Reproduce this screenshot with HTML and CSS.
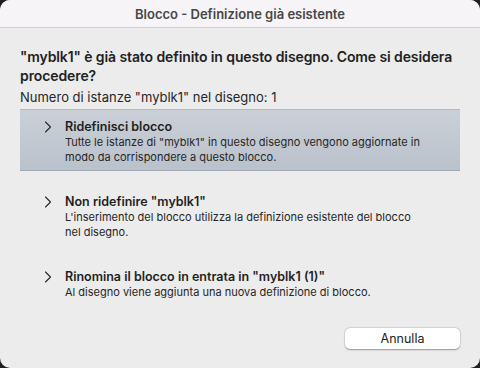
FILE: index.html
```html
<!DOCTYPE html>
<html lang="it">
<head>
  <meta charset="UTF-8" />
  <title>Blocco - Definizione già esistente</title>
  <link rel="stylesheet" href="styles.css">
</head>
<body>
  <div class="window">
    <div class="titlebar">Blocco - Definizione già esistente</div>

    <div class="content">
      <div class="question">"myblk1" è già stato definito in questo disegno. Come si desidera procedere?</div>
      <div class="count">Numero di istanze "myblk1" nel disegno: 1</div>

      <div class="options">
        <div class="option active">
          <svg class="chev" width="8" height="12" viewBox="0 0 8 12"><polyline points="1.5,1 6.5,6 1.5,11" /></svg>
          <div class="option-text">
            <div class="option-title">Ridefinisci blocco</div>
            <div class="option-desc">Tutte le istanze di "myblk1" in questo disegno vengono aggiornate in modo da corrispondere a questo blocco.</div>
          </div>
        </div>
        <div class="option">
          <svg class="chev" width="8" height="12" viewBox="0 0 8 12"><polyline points="1.5,1 6.5,6 1.5,11" /></svg>
          <div class="option-text">
            <div class="option-title">Non ridefinire "myblk1"</div>
            <div class="option-desc">L'inserimento del blocco utilizza la definizione esistente del blocco nel disegno.</div>
          </div>
        </div>
        <div class="option">
          <svg class="chev" width="8" height="12" viewBox="0 0 8 12"><polyline points="1.5,1 6.5,6 1.5,11" /></svg>
          <div class="option-text">
            <div class="option-title">Rinomina il blocco in entrata in "myblk1 (1)"</div>
            <div class="option-desc">Al disegno viene aggiunta una nuova definizione di blocco.</div>
          </div>
        </div>
      </div>

      <div class="footer">
        <button class="btn">Annulla</button>
      </div>
    </div>
  </div>
</body>
</html>
```

FILE: styles.css
```css
html, body {
  margin: 0;
  padding: 0;
}

body {
  background: #1b1f27;
  width: 480px;
  height: 368px;
  overflow: hidden;
  font-family: Inter, "Noto Sans", sans-serif;
  color: #262626;
}

.window {
  width: 480px;
  height: 368px;
  background: #ececec;
  border-radius: 10px;
  overflow: hidden;
  display: flex;
  flex-direction: column;
}

.titlebar {
  height: 28px;
  flex: none;
  background: #f6f4f6;
  border-bottom: 1px solid #cfcfcf;
  color: #474747;
  font-size: 13px;
  font-weight: 600;
  display: flex;
  align-items: center;
  justify-content: center;
  box-sizing: border-box;
  padding-top: 1px;
}

.content {
  flex: 1;
  display: flex;
  flex-direction: column;
  padding: 19px 20px 0 20px;
}

.question {
  font-size: 14px;
  font-weight: 600;
  line-height: 19px;
  color: #222;
  letter-spacing: -0.1px;
}

.count {
  font-size: 13px;
  line-height: 17px;
  margin-top: 4px;
  color: #262626;
}

.options {
  display: flex;
  flex-direction: column;
  gap: 13px;
  margin-top: 3px;
}

.option {
  height: 62px;
  box-sizing: border-box;
  display: flex;
  align-items: flex-start;
  padding: 9px 0 0 24px;
  border-top: 1px solid transparent;
  border-bottom: 1px solid transparent;
}

.option.active {
  background: linear-gradient(#cbd0d7, #b9c1cb);
  border-top-color: #b3bac4;
  border-bottom-color: #a2aab5;
}

.chev {
  flex: none;
  margin-top: 2px;
  margin-right: 13px;
}

.chev polyline {
  fill: none;
  stroke: #2a2a2a;
  stroke-width: 1.1;
  stroke-linecap: round;
  stroke-linejoin: round;
}

.option-text {
  width: 362px;
}

.option-title {
  font-size: 12.5px;
  font-weight: 600;
  line-height: 16px;
  color: #1f1f1f;
}

.option-desc {
  font-size: 11px;
  line-height: 14.5px;
  color: #262626;
}

.footer {
  margin-top: auto;
  display: flex;
  justify-content: flex-end;
  padding-bottom: 19px;
}

.btn {
  width: 115px;
  height: 21px;
  background: #fff;
  border: none;
  border-radius: 5px;
  box-shadow: 0 0.5px 1.5px rgba(0,0,0,0.35), 0 0 0 0.5px rgba(0,0,0,0.08);
  font-family: Inter, "Noto Sans", sans-serif;
  font-size: 12.5px;
  color: #222;
  padding: 0;
}
```
